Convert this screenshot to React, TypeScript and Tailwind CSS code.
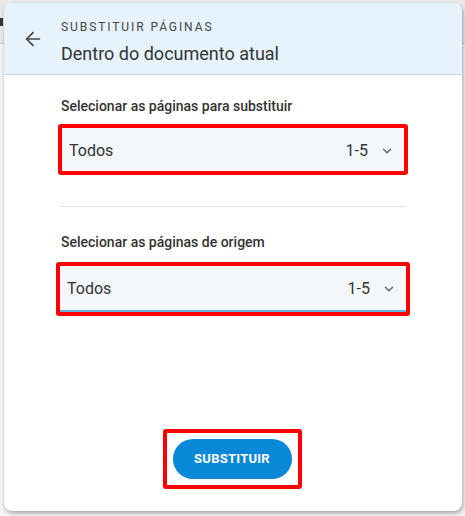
import { ArrowLeft, ChevronDown } from "lucide-react";

function PageSelect({ label, focused = false, wide = false }: { label: string; focused?: boolean; wide?: boolean }) {
  return (
    <div>
      <p className="pl-[3px] text-[14px] font-medium leading-4 text-[#333]">{label}</p>
      <div
        className={`rounded-[3px] border-4 border-[#ff0000] ${wide ? "-mx-[2px] mt-3" : "mt-[10px]"}`}
      >
        <div
          className={`flex items-center bg-[#f3f7fb] pl-[7px] pr-[10px] pt-[2px] text-[16px] text-[#333] ${
            focused ? "h-[46px] border-b-2 border-[#64b0e3]" : "h-[43px]"
          }`}
        >
          <span className="flex-1">Todos</span>
          <span className="mr-[12px]">1-5</span>
          <ChevronDown className="h-[14px] w-[14px] text-[#666]" strokeWidth={2.5} />
        </div>
      </div>
    </div>
  );
}

export default function App() {
  return (
    <div
      className="relative h-[516px] w-[465px] overflow-hidden bg-[#e9e9e9]"
      style={{ fontFamily: "Roboto, 'Noto Sans', sans-serif" }}
    >
      {/* page behind the dialog */}
      <div className="absolute left-0 top-[18px] h-[8px] w-[3px] bg-[#333]" />
      <div className="absolute left-0 top-[43px] h-px w-full bg-[#cfcfcf]" />
      <div className="absolute left-0 top-[44px] h-full w-full bg-[#f4f4f4]" />

      <div className="relative ml-[4px] mt-[3px] flex h-[508px] w-[458px] flex-col overflow-hidden rounded-lg bg-white shadow-[1px_2px_4px_rgba(0,0,0,0.35)]">
        <div className="flex h-[72px] items-center border-b border-[#d0d7dd] bg-[#e6f3fd]">
          <div className="flex w-[57px] justify-center pt-[1px]">
            <ArrowLeft className="h-[22px] w-[22px] text-[#444]" strokeWidth={1.8} />
          </div>
          <div className="pt-[6px]">
            <p className="text-[12px] leading-4 tracking-[0.16em] text-[#444]">SUBSTITUIR PÁGINAS</p>
            <p className="mt-[9px] text-[18px] leading-5 text-[#333]">Dentro do documento atual</p>
          </div>
        </div>

        <div className="flex flex-1 flex-col px-[54px] pt-[23px]">
          <PageSelect label="Selecionar as páginas para substituir" />
          <div className="mx-[2px] mt-[31px] h-px bg-[#e4e4e4]" />
          <div className="mt-[27px]">
            <PageSelect label="Selecionar as páginas de origem" focused wide />
          </div>

          <div className="mt-auto mb-[22px] flex justify-center pr-[2px]">
            <div className="rounded-[3px] border-4 border-[#ff0000] px-[6px] py-[6px]">
              <button className="h-[40px] w-[119px] rounded-full bg-[#0a88d8] text-[13px] font-bold tracking-[0.02em] text-white">
                SUBSTITUIR
              </button>
            </div>
          </div>
        </div>
      </div>
    </div>
  );
}
